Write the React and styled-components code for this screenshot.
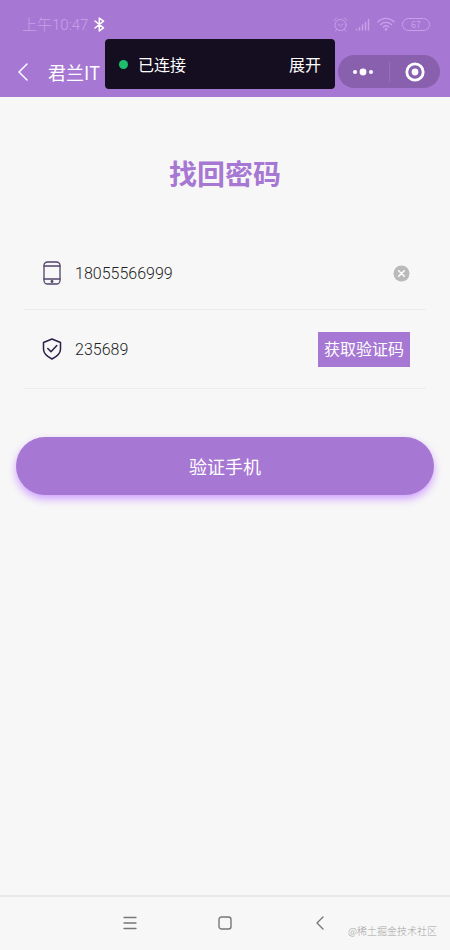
import React, { useState } from 'react';
import styled, { createGlobalStyle } from 'styled-components';

const purple = '#a777d4';

const GlobalStyle = createGlobalStyle`
  *, *::before, *::after { box-sizing: border-box; }
  body { margin: 0; background: #f7f7f7; }
  body, button {
    font-family: "Noto Sans CJK SC", sans-serif;
  }
  button { border: 0; padding: 0; background: none; color: inherit; cursor: pointer; }
`;

const Page = styled.div`
  position: relative;
  display: flex;
  flex-direction: column;
  min-height: 100vh;
  background: #f7f7f7;
`;

const Header = styled.header`
  background: ${purple};
  color: #fff;
`;

const StatusBar = styled.div`
  display: flex;
  align-items: center;
  justify-content: space-between;
  height: 48px;
  padding: 0 20px 0 22px;
  color: #c6a1e8;
`;

const StatusGroup = styled.div`
  display: flex;
  align-items: center;
  gap: ${(p) => p.$gap}px;
`;

const Clock = styled.time`
  padding-top: 2px;
  font-family: Roboto, "Noto Sans CJK SC", sans-serif;
  font-size: 15px;
  line-height: 24px;
  font-weight: 300;
`;

const NavBar = styled.div`
  display: flex;
  align-items: center;
  justify-content: space-between;
  height: 49px;
  padding: 0 10px 2px 16px;
`;

const NavTitle = styled.div`
  display: flex;
  align-items: center;
  gap: 16px;
`;

const IconButton = styled.button`
  display: flex;
  align-items: center;
  justify-content: center;
`;

const AppName = styled.h1`
  margin: 0;
  font-size: 18px;
  line-height: 24px;
  font-weight: 400;
`;

const Capsule = styled.div`
  display: flex;
  align-items: center;
  width: 102px;
  height: 33px;
  border-radius: 17px;
  background: #8860ae;
`;

const CapsuleButton = styled(IconButton)`
  flex: 1;
  height: 20px;
  & + & { border-left: 1px solid #9670ba; }
`;

const Toast = styled.div`
  position: absolute;
  top: 39px;
  left: 105px;
  right: 115px;
  display: flex;
  align-items: center;
  height: 50px;
  padding: 0 14px;
  border-radius: 4px;
  background: #150e20;
  color: #fff;
  font-size: 16px;
  line-height: 24px;
`;

const StatusDot = styled.span`
  width: 9px;
  height: 9px;
  margin-right: 10px;
  border-radius: 50%;
  background: #1cc06c;
`;

const ToastAction = styled.button`
  margin-left: auto;
  font-size: 16px;
  line-height: 24px;
`;

const Content = styled.main`
  flex: 1;
  padding: 56px 16px 40px;
`;

const Title = styled.h2`
  margin: 0 0 28px;
  color: ${purple};
  font-size: 28px;
  line-height: 40px;
  font-weight: 700;
  text-align: center;
`;

const Fields = styled.div`
  margin: 0 8px 48px;
`;

const Field = styled.div`
  display: flex;
  align-items: center;
  height: ${(p) => p.$height}px;
  padding: ${(p) => p.$padding};
  border-bottom: 1px solid #ececec;
`;

const FieldLabel = styled.label`
  display: flex;
  justify-content: center;
  width: 24px;
  margin-right: 11px;
`;

const FieldInput = styled.input`
  flex: 1;
  min-width: 0;
  padding: 2px 0 0;
  border: 0;
  outline: 0;
  background: transparent;
  color: #222;
  font-family: Roboto, "Noto Sans CJK SC", sans-serif;
  font-size: 16px;
  font-weight: 300;
  line-height: 24px;
`;

const CodeButton = styled.button`
  height: 35px;
  padding: 0 6px 2px;
  background: ${purple};
  color: #fff;
  font-size: 16px;
  line-height: 24px;
`;

const SubmitButton = styled.button`
  display: block;
  width: 100%;
  height: 58px;
  border-radius: 29px;
  background: ${purple};
  color: #fff;
  font-size: 18px;
  line-height: 24px;
  box-shadow: 0 4px 8px #cfa0ff;
`;

const SystemNav = styled.nav`
  position: relative;
  display: flex;
  align-items: center;
  justify-content: center;
  gap: 73px;
  height: 55px;
  padding-bottom: 2px;
  border-top: 2px solid #e9e9e9;
  color: #777;
`;

const SystemButton = styled(IconButton)`
  width: 22px;
  height: 22px;
`;

const Watermark = styled.span`
  position: absolute;
  right: 13px;
  bottom: 12px;
  color: #a3a3a3;
  font-size: 10px;
  line-height: 14px;
  font-weight: 300;
`;

const Svg = ({ w, h, children, sw = 1, ...rest }) => (
  <svg width={w} height={h} viewBox={`0 0 ${w} ${h}`} fill="none" stroke="currentColor"
    strokeWidth={sw} strokeLinecap="round" strokeLinejoin="round" aria-hidden="true" {...rest}>
    {children}
  </svg>
);

const Bluetooth = () => (
  <Svg w={11} h={15} sw={1.5} stroke="#fff">
    <path d="M1 4l8.5 6.8L5.3 14V1l4.2 3.2L1 11" />
  </Svg>
);

const Alarm = () => (
  <Svg w={15} h={15}>
    <circle cx="7.5" cy="8" r="5.6" />
    <path d="M1 3.5L3.5 1M14 3.5L11.5 1M5 7l2.5 2L10 7M3.5 12.5L2.5 14M11.5 12.5l1 1.5" />
  </Svg>
);

const Signal = () => (
  <Svg w={15} h={13} sw={1.5}>
    <path d="M1.5 11.5v.3M4.5 9.5V12M7.5 7V12M10.5 4.5V12M13.5 1.5V12" />
  </Svg>
);

const Wifi = () => (
  <Svg w={18} h={14} sw={1.4}>
    <path d="M1 4.7C5.5.3 12.5.3 17 4.7M3.7 7.5c3-2.9 7.6-2.9 10.6 0M6.3 10c1.6-1.5 3.8-1.5 5.4 0" />
    <circle cx="9" cy="12.3" r=".7" fill="currentColor" />
  </Svg>
);

const Battery = styled.span`
  display: flex;
  align-items: center;
  justify-content: center;
  width: 28px;
  height: 13px;
  border: 1px solid currentColor;
  border-radius: 7px;
  font-size: 9px;
  line-height: 11px;
`;

const BackIcon = () => (
  <Svg w={16} h={20} sw={1.5}><path d="M11 2L3 10l8 8" /></Svg>
);

const DotsIcon = () => (
  <Svg w={22} h={8} fill="#fff" stroke="none">
    <circle cx="3" cy="4" r="2" /><circle cx="11" cy="4" r="3.4" /><circle cx="19" cy="4" r="2" />
  </Svg>
);

const TargetIcon = () => (
  <Svg w={20} h={20} sw={2.8} stroke="#fff">
    <circle cx="10" cy="10" r="8.2" />
    <circle cx="10" cy="10" r="3.4" fill="#fff" stroke="none" />
  </Svg>
);

const PhoneIcon = () => (
  <Svg w={18} h={24} sw={1.3} stroke="#51446b">
    <rect x="1" y="1" width="16" height="22" rx="3.5" />
    <path d="M1 5h16M1 18h16" />
    <circle cx="9" cy="20.5" r=".8" fill="#2c1e4a" />
  </Svg>
);

const ShieldIcon = () => (
  <Svg w={20} h={22} sw={1.5} stroke="#2c1e4a">
    <path d="M10 1L1.500 4.500V11c0 4.500 3.500 7.500 8.500 10 5-2.500 8.500-5.500 8.500-10V4.500z" />
    <path d="M5.800 10.500l3.200 3.300L14.800 7.500" />
  </Svg>
);

const ClearIcon = () => (
  <Svg w={17} h={17} sw={1.5} stroke="#fff">
    <circle cx="8.5" cy="8.5" r="8" fill="#bababa" stroke="none" />
    <path d="M5.7 5.7l5.6 5.6M11.3 5.7l-5.6 5.6" />
  </Svg>
);

const MenuIcon = () => (
  <Svg w={14} h={14} sw={1.3}><path d="M1 1.5h12M1 7h12M1 12.5h12" /></Svg>
);

const HomeIcon = () => (
  <Svg w={14} h={14} sw={1.4}><rect x="1" y="1" width="12" height="12" rx="2.5" /></Svg>
);

const ReturnIcon = () => (
  <Svg w={10} h={14} sw={1.4}><path d="M8 1L2 7l6 6" /></Svg>
);

export default function App() {
  const [phone, setPhone] = useState('18055566999');
  const [code, setCode] = useState('235689');

  return (
    <Page>
      <GlobalStyle />
      <Header>
        <StatusBar>
          <StatusGroup $gap={6}>
            <Clock>上午10:47</Clock>
            <Bluetooth />
          </StatusGroup>
          <StatusGroup $gap={7}>
            <Alarm />
            <Signal />
            <Wifi />
            <Battery>67</Battery>
          </StatusGroup>
        </StatusBar>
        <NavBar>
          <NavTitle>
            <IconButton aria-label="返回"><BackIcon /></IconButton>
            <AppName>君兰IT</AppName>
          </NavTitle>
          <Capsule>
            <CapsuleButton aria-label="更多"><DotsIcon /></CapsuleButton>
            <CapsuleButton aria-label="关闭"><TargetIcon /></CapsuleButton>
          </Capsule>
        </NavBar>
      </Header>
      <Toast role="status">
        <StatusDot />
        已连接
        <ToastAction>展开</ToastAction>
      </Toast>
      <Content>
        <Title>找回密码</Title>
        <Fields>
          <Field $height={89} $padding="16px 16px 0">
            <FieldLabel htmlFor="phone" aria-label="手机号"><PhoneIcon /></FieldLabel>
            <FieldInput id="phone" type="tel" value={phone} onChange={(e) => setPhone(e.target.value)} />
            <IconButton aria-label="清除" onClick={() => setPhone('')}><ClearIcon /></IconButton>
          </Field>
          <Field $height={79} $padding="0 16px">
            <FieldLabel htmlFor="code" aria-label="验证码"><ShieldIcon /></FieldLabel>
            <FieldInput id="code" inputMode="numeric" value={code} onChange={(e) => setCode(e.target.value)} />
            <CodeButton>获取验证码</CodeButton>
          </Field>
        </Fields>
        <SubmitButton>验证手机</SubmitButton>
      </Content>
      <SystemNav>
        <SystemButton aria-label="菜单"><MenuIcon /></SystemButton>
        <SystemButton aria-label="主页"><HomeIcon /></SystemButton>
        <SystemButton aria-label="后退"><ReturnIcon /></SystemButton>
        <Watermark>@稀土掘金技术社区</Watermark>
      </SystemNav>
    </Page>
  );
}
